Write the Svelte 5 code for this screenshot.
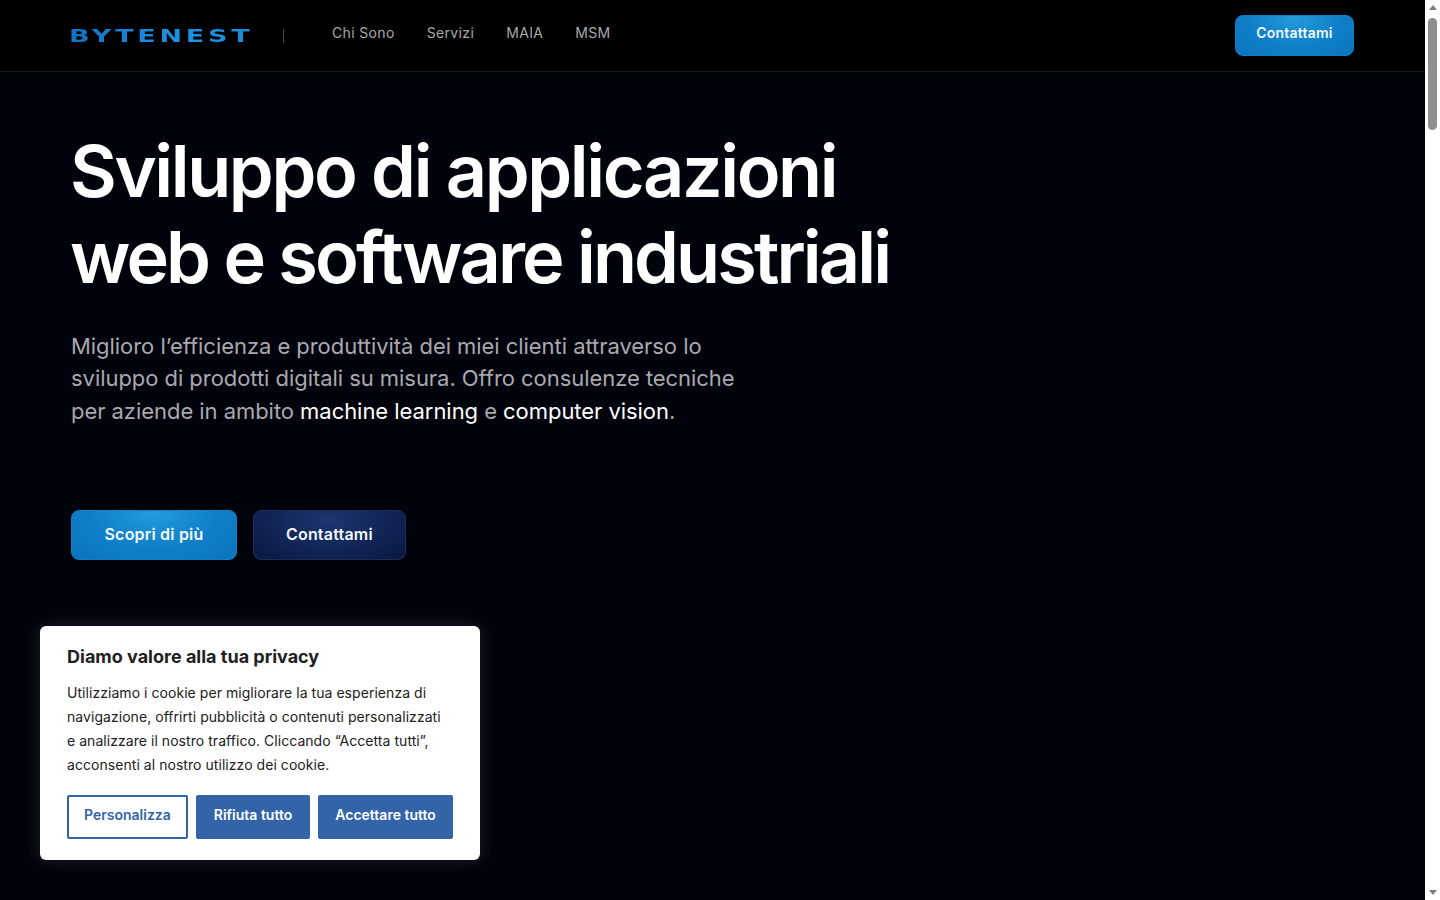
<script>
  const links = ["Chi Sono", "Servizi", "MAIA", "MSM"];
</script>

<div class="window">
  <div class="page">
    <header class="topbar">
      <span class="logo-box"><span class="logo">BYTENEST</span></span>
      <span class="divider"></span>
      <nav class="links">
        {#each links as link}
          <a href="#top">{link}</a>
        {/each}
      </nav>
      <button class="btn primary small">Contattami</button>
    </header>

    <section class="hero">
      <h1>
        <span class="line-one">Sviluppo di applicazioni</span>
        <span class="line-two">web e software industriali</span>
      </h1>
      <p class="lead">
        Miglioro l’efficienza e produttività dei miei clienti attraverso lo
        sviluppo di prodotti digitali su misura. Offro consulenze tecniche
        per aziende in ambito <em>machine learning</em> e <em>computer vision</em>.
      </p>
      <div class="actions">
        <button class="btn primary">Scopri di più</button>
        <button class="btn secondary">Contattami</button>
      </div>
    </section>

    <aside class="cookie">
      <h2>Diamo valore alla tua privacy</h2>
      <p>
        Utilizziamo i cookie per migliorare la tua esperienza di navigazione,
        offrirti pubblicità o contenuti personalizzati e analizzare il nostro
        traffico. Cliccando “Accetta tutti”, acconsenti al nostro utilizzo dei cookie.
      </p>
      <div class="cookie-actions">
        <button class="outline">Personalizza</button>
        <button class="solid reject">Rifiuta tutto</button>
        <button class="solid">Accettare tutto</button>
      </div>
    </aside>
  </div>

  <div class="scrollbar">
    <span class="arrow up"></span>
    <div class="track"><span class="thumb"></span></div>
    <span class="arrow down"></span>
  </div>
</div>

<style>
  :global(body) {
    margin: 0;
    background: #01030c;
    font-family: Inter, "Liberation Sans", sans-serif;
  }

  .window {
    display: flex;
    height: 900px;
    overflow: hidden;
  }

  .page {
    position: relative;
    flex: 1;
    background: #01030c;
    color: #fff;
  }

  .topbar {
    display: flex;
    align-items: center;
    height: 71px;
    padding: 0 71px;
    background: #000;
    border-bottom: 1px solid #1c1c1e;
  }

  .logo-box {
    width: 180px;
    height: 22px;
  }

  .logo {
    display: inline-block;
    margin-left: -2px;
    transform: scaleX(1.5);
    transform-origin: left center;
    font-family: "DejaVu Sans", sans-serif;
    font-weight: 700;
    font-size: 18px;
    line-height: 22px;
    letter-spacing: 2.5px;
    white-space: nowrap;
    background: linear-gradient(90deg, #1272c4 0%, #1c92e2 60%, #1b8ad8 100%);
    -webkit-background-clip: text;
    background-clip: text;
    color: transparent;
  }

  .divider {
    width: 1px;
    height: 14px;
    margin-left: 32px;
    background: #444;
  }

  .links {
    display: flex;
    gap: 32px;
    margin-left: 48px;
    flex: 1;
    margin-top: -7px;
  }

  .links a {
    color: #a8a8a8;
    font-size: 14px;
    letter-spacing: 0.35px;
    text-decoration: none;
  }

  .btn {
    height: 50px;
    padding: 0 32.5px 3px;
    border-radius: 8px;
    color: #f2f8fc;
    font-family: inherit;
    font-size: 16px;
    font-weight: 600;
    letter-spacing: 0.2px;
  }

  .primary {
    border: 1px solid #0f7fc9;
    background: radial-gradient(ellipse at 50% 0%, #259cdb 0%, #0f7fc9 55%, #0b74bd 100%);
  }

  .secondary {
    padding: 0 32px 3px;
    border: 1px solid #1e2d55;
    background: radial-gradient(ellipse at 50% 20%, #1c3670 0%, #0a1a44 90%);
  }

  .small {
    height: 41px;
    width: 119px;
    padding: 0 0 5px;
    margin-top: -1px;
    font-size: 14px;
    letter-spacing: 0.2px;
  }

  .hero {
    padding: 56px 71px 0;
  }

  h1 {
    margin: 0 0 0 -1px;
    font-size: 72px;
    font-weight: 560;
    line-height: 86px;
  }

  h1 span {
    display: block;
  }

  .line-one {
    letter-spacing: -2.4px;
  }

  .line-two {
    letter-spacing: -2.9px;
  }

  .lead {
    width: 680px;
    margin: 29.8px 0 0;
    font-size: 22px;
    line-height: 32.5px;
    letter-spacing: -0.05px;
    color: #a9a9ae;
  }

  .lead em {
    font-style: normal;
    color: #fff;
  }

  .actions {
    display: flex;
    gap: 16px;
    margin-top: 83px;
  }

  .cookie {
    position: absolute;
    left: 40px;
    top: 626px;
    width: 440px;
    height: 234px;
    box-sizing: border-box;
    padding: 20px 27px;
    background: #fff;
    border-radius: 6px;
    color: #212121;
    box-shadow: 0 0 18px rgba(255, 255, 255, 0.12);
  }

  .cookie h2 {
    margin: 0;
    font-size: 18px;
    font-weight: 700;
    line-height: 22px;
  }

  .cookie p {
    margin: 13px 0 0;
    padding-right: 8px;
    font-size: 14px;
    line-height: 24px;
    letter-spacing: 0.05px;
  }

  .cookie-actions {
    display: flex;
    gap: 8px;
    margin-top: 18px;
  }

  .cookie-actions button {
    height: 44px;
    padding: 0 15px 6px;
    border: 2px solid #3364a8;
    border-radius: 2px;
    font-family: inherit;
    font-size: 14px;
    font-weight: 600;
  }

  .cookie-actions .reject {
    padding: 0 16px 6px;
  }

  .outline {
    background: #fff;
    color: #3364a8;
  }

  .solid {
    background: #3364a8;
    color: #fff;
  }

  .scrollbar {
    display: flex;
    flex-direction: column;
    align-items: center;
    width: 15px;
    background: #fff;
  }

  .arrow {
    flex: none;
    width: 0;
    height: 0;
    margin: 5px 0;
    border-left: 4px solid transparent;
    border-right: 4px solid transparent;
  }

  .up {
    border-bottom: 5px solid #7d7d7d;
  }

  .down {
    border-top: 5px solid #7d7d7d;
  }

  .track {
    flex: 1;
    width: 100%;
  }

  .thumb {
    display: block;
    width: 9px;
    height: 112px;
    margin: 3px auto 0;
    border-radius: 5px;
    background: #8f8f8f;
  }
</style>
